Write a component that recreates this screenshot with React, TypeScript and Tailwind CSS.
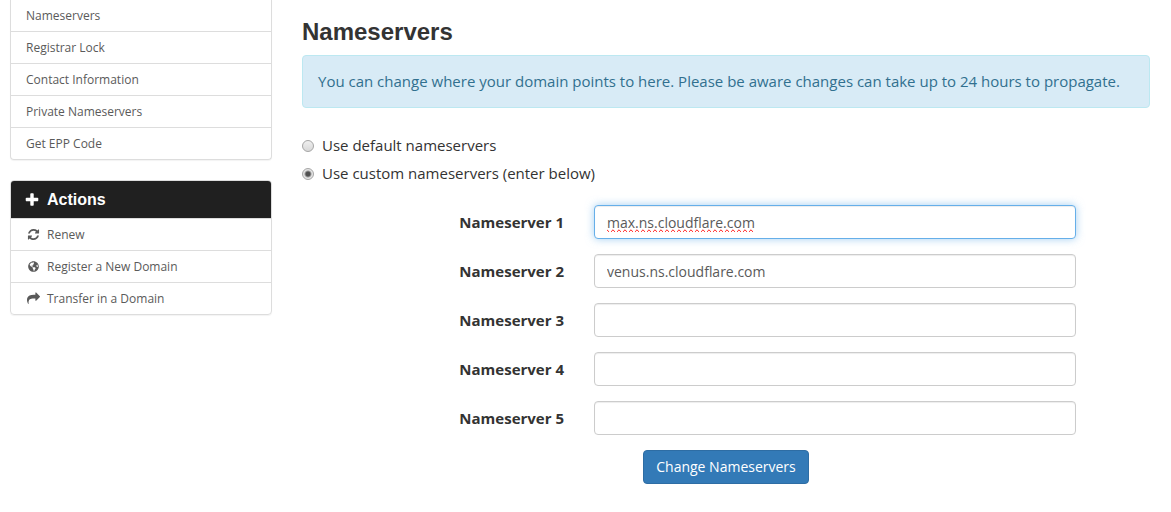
import { useState } from "react";
import { FaGlobeAmericas } from "react-icons/fa";

const PLUS =
  "M1600 736v192q0 40-28 68t-68 28h-416v416q0 40-28 68t-68 28h-192q-40 0-68-28t-28-68v-416h-416q-40 0-68-28t-28-68v-192q0-40 28-68t68-28h416v-416q0-40 28-68t68-28h192q40 0 68 28t28 68v416h416q40 0 68 28t28 68z";
const REFRESH =
  "M1639 1056q0 5-1 7-64 268-268 434.5t-478 166.5q-146 0-282.5-55t-243.5-157l-129 129q-19 19-45 19t-45-19-19-45v-448q0-26 19-45t45-19h448q26 0 45 19t19 45-19 45l-137 137q71 66 161 102t187 36q134 0 250-65t186-179q11-17 53-117 8-23 30-23h192q13 0 22.5 9.5t9.5 22.5zm25-800v448q0 26-19 45t-45 19h-448q-26 0-45-19t-19-45 19-45l138-138q-148-137-349-137-134 0-250 65t-186 179q-11 17-53 117-8 23-30 23h-199q-13 0-22.5-9.5t-9.5-22.5v-7q65-268 270-434.5t480-166.5q146 0 284 55.5t245 156.5l130-129q19-19 45-19t45 19 19 45z";
const SHARE =
  "M1792 640q0 26-19 45l-512 512q-19 19-45 19t-45-19-19-45v-256h-224q-98 0-175.5 6t-154 21.5-133 42.5-105.5 69.5-80 101-48.5 138.5-17.5 181q0 55 5 123 0 6 2.5 23.5t2.5 26.5q0 15-8.5 25t-23.5 10q-16 0-28-17-7-9-13-22t-13.5-30-10.5-24q-127-285-127-451 0-199 53-333 162-403 875-403h224v-256q0-26 19-45t45-19 45 19l512 512q19 19 19 45z";

function Glyph({ path, className }: { path: string; className: string }) {
  return (
    <svg viewBox="0 0 1792 1792" fill="currentColor" aria-hidden="true" className={className}>
      <path d={path} />
    </svg>
  );
}

const manageLinks = [
  "Nameservers",
  "Registrar Lock",
  "Contact Information",
  "Private Nameservers",
  "Get EPP Code",
];

const actionLinks = [
  { label: "Renew", icon: <Glyph path={REFRESH} className="size-[13px]" /> },
  { label: "Register a New Domain", icon: <FaGlobeAmericas className="size-[11px]" /> },
  { label: "Transfer in a Domain", icon: <Glyph path={SHARE} className="size-[13px]" /> },
];

const itemClass =
  "flex h-8 items-center border-b border-[#ddd] px-[15px] text-xs text-[#5a5a5a] last:h-[31px] last:border-b-0 hover:bg-gray-100";

const radioClass =
  "size-3 shrink-0 appearance-none rounded-full border border-[#a5a5a5] bg-[linear-gradient(#efefef,#d8d8d8)] checked:bg-[radial-gradient(circle,#505050_2px,#e4e4e4_4px)]";

export default function App() {
  const [mode, setMode] = useState("custom");
  const [servers, setServers] = useState([
    "max.ns.cloudflare.com",
    "venus.ns.cloudflare.com",
    "",
    "",
    "",
  ]);

  return (
    <div className="grid grid-cols-[262px_minmax(0,1fr)] gap-[30px] bg-white pr-[21px] pb-7 pl-[10px] font-['Open_Sans',sans-serif] text-[15px] leading-[21px] text-[#333]">
      <aside className="flex flex-col gap-5">
        <nav
          aria-label="Manage"
          className="overflow-hidden rounded-b border border-t-0 border-[#ddd] shadow-[0_1px_1px_rgba(0,0,0,0.05)]"
        >
          {manageLinks.map((label) => (
            <a key={label} href="#" className={itemClass}>
              {label}
            </a>
          ))}
        </nav>
        <nav
          aria-label="Actions"
          className="overflow-hidden rounded border border-[#ddd] shadow-[0_1px_1px_rgba(0,0,0,0.05)]"
        >
          <h3 className="flex h-[38px] items-center gap-[7px] border-b border-[#ddd] bg-[#202020] px-[13px] font-['Liberation_Sans',sans-serif] text-base font-bold text-white">
            <Glyph path={PLUS} className="size-4" />
            Actions
          </h3>
          {actionLinks.map(({ label, icon }) => (
            <a key={label} href="#" className={itemClass}>
              <span className="mr-[6px] flex w-[15px] justify-center">{icon}</span>
              {label}
            </a>
          ))}
        </nav>
      </aside>

      <main className="pt-[19px]">
        <h1 className="mb-[10px] font-['Liberation_Sans',sans-serif] text-2xl leading-[26px] font-bold">
          Nameservers
        </h1>
        <div className="mb-[27px] rounded border border-[#bce8f1] bg-[#d8ebf6] p-[15px] text-[#31708f]">
          You can change where your domain points to here. Please be aware changes can take up to 24
          hours to propagate.
        </div>
        <form onSubmit={(e) => e.preventDefault()}>
          <div className="mb-[21px] flex flex-col items-start gap-[7px]">
            <label className="flex items-center gap-2">
              <input
                type="radio"
                name="mode"
                className={radioClass}
                checked={mode === "default"}
                onChange={() => setMode("default")}
              />
              Use default nameservers
            </label>
            <label className="flex items-center gap-2">
              <input
                type="radio"
                name="mode"
                className={radioClass}
                checked={mode === "custom"}
                onChange={() => setMode("custom")}
              />
              Use custom nameservers (enter below)
            </label>
          </div>
          {servers.map((value, i) => (
            <div key={i} className="mb-[15px] grid grid-cols-[262fr_482fr_44fr] items-center gap-x-[30px]">
              <label htmlFor={`ns${i + 1}`} className="text-right font-bold">
                Nameserver {i + 1}
              </label>
              <input
                id={`ns${i + 1}`}
                type="text"
                value={value}
                onChange={(e) => setServers(servers.map((s, n) => (n === i ? e.target.value : s)))}
                className={
                  i === 0
                    ? "block h-[34px] w-full rounded border border-[#66afe9] bg-white px-3 text-sm text-[#5a5a5a] [text-decoration-line:spelling-error] [text-decoration-skip-ink:none] shadow-[inset_0_1px_1px_rgba(0,0,0,0.075),0_0_8px_rgba(102,175,233,0.6)] outline-none"
                    : "block h-[34px] w-full rounded border border-[#ccc] bg-white px-3 text-sm text-[#5a5a5a] shadow-[inset_0_1px_1px_rgba(0,0,0,0.075)] outline-none"
                }
              />
            </div>
          ))}
          <div className="text-center">
            <button
              type="submit"
              className="h-[34px] rounded border border-[#2e6da4] bg-[#337ab7] px-3 text-sm text-white"
            >
              Change Nameservers
            </button>
          </div>
        </form>
      </main>
    </div>
  );
}
